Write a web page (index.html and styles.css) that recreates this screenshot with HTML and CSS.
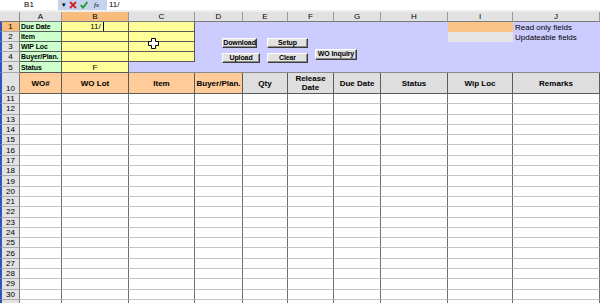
FILE: index.html
```html
<!DOCTYPE html>
<html>
<head>
<meta charset="utf-8">
<title>WO Sheet</title>
<link rel="stylesheet" href="styles.css">
</head>
<body>
<div class="app">
  <div class="fbar">
    <div class="namebox">B1</div>
    <div class="fbtns">
      <span class="dd">&#9662;</span>
      <svg class="ico" width="8" height="8" viewBox="0 0 8 8"><path d="M1 1L7 7M7 1L1 7" stroke="#d42020" stroke-width="1.8"/></svg>
      <svg class="ico" width="8" height="8" viewBox="0 0 8 8"><path d="M0.8 4.2L3 6.6L7.4 1" fill="none" stroke="#1f9a2e" stroke-width="1.8"/></svg>
      <span class="fx">fx</span>
    </div>
    <div class="formula">11/</div>
  </div>
  <div class="gap"></div>
  <div class="sheet">
    <div class="corner"></div>
    <div class="ch">A</div><div class="ch sel">B</div><div class="ch">C</div><div class="ch">D</div><div class="ch">E</div><div class="ch">F</div><div class="ch">G</div><div class="ch">H</div><div class="ch">I</div><div class="ch">J</div>

    <div class="rh sel">1</div>
    <div class="lbl">Due Date</div>
    <div class="inp edit"><span>11/</span><i class="caret"></i></div>
    <div class="inp"></div>
    <div class="panel">
      <div class="btn b-down">Download</div>
      <div class="btn b-setup">Setup</div>
      <div class="btn b-inq">WO Inquiry</div>
      <div class="btn b-up">Upload</div>
      <div class="btn b-clear">Clear</div>
    </div>
    <div class="sw ro"></div>
    <div class="legend">Read only fields</div>

    <div class="rh">2</div>
    <div class="lbl">Item</div>
    <div class="inp"></div>
    <div class="inp"></div>
    <div class="sw up"></div>
    <div class="legend">Updateable fields</div>

    <div class="rh">3</div>
    <div class="lbl">WIP Loc</div>
    <div class="inp"></div>
    <div class="inp"></div>
    <div class="side"></div>

    <div class="rh">4</div>
    <div class="lbl">Buyer/Plan.</div>
    <div class="inp"></div>
    <div class="inp"></div>

    <div class="rh">5</div>
    <div class="lbl last">Status</div>
    <div class="inp last ctr">F</div>
    <div class="lav"></div>

    <div class="rh r10">10</div>
    <div class="hd or">WO#</div><div class="hd or">WO Lot</div><div class="hd or">Item</div><div class="hd or">Buyer/Plan.</div>
    <div class="hd gr">Qty</div><div class="hd gr">Release<br>Date</div><div class="hd gr">Due Date</div><div class="hd gr">Status</div><div class="hd gr">Wip Loc</div><div class="hd gr">Remarks</div>

    <div class="rh">11</div><div class="d"></div><div class="d"></div><div class="d"></div><div class="d"></div><div class="d"></div><div class="d"></div><div class="d"></div><div class="d"></div><div class="d"></div><div class="d"></div>
    <div class="rh">12</div><div class="d"></div><div class="d"></div><div class="d"></div><div class="d"></div><div class="d"></div><div class="d"></div><div class="d"></div><div class="d"></div><div class="d"></div><div class="d"></div>
    <div class="rh">13</div><div class="d"></div><div class="d"></div><div class="d"></div><div class="d"></div><div class="d"></div><div class="d"></div><div class="d"></div><div class="d"></div><div class="d"></div><div class="d"></div>
    <div class="rh">14</div><div class="d"></div><div class="d"></div><div class="d"></div><div class="d"></div><div class="d"></div><div class="d"></div><div class="d"></div><div class="d"></div><div class="d"></div><div class="d"></div>
    <div class="rh">15</div><div class="d"></div><div class="d"></div><div class="d"></div><div class="d"></div><div class="d"></div><div class="d"></div><div class="d"></div><div class="d"></div><div class="d"></div><div class="d"></div>
    <div class="rh">16</div><div class="d"></div><div class="d"></div><div class="d"></div><div class="d"></div><div class="d"></div><div class="d"></div><div class="d"></div><div class="d"></div><div class="d"></div><div class="d"></div>
    <div class="rh">17</div><div class="d"></div><div class="d"></div><div class="d"></div><div class="d"></div><div class="d"></div><div class="d"></div><div class="d"></div><div class="d"></div><div class="d"></div><div class="d"></div>
    <div class="rh">18</div><div class="d"></div><div class="d"></div><div class="d"></div><div class="d"></div><div class="d"></div><div class="d"></div><div class="d"></div><div class="d"></div><div class="d"></div><div class="d"></div>
    <div class="rh">19</div><div class="d"></div><div class="d"></div><div class="d"></div><div class="d"></div><div class="d"></div><div class="d"></div><div class="d"></div><div class="d"></div><div class="d"></div><div class="d"></div>
    <div class="rh">20</div><div class="d"></div><div class="d"></div><div class="d"></div><div class="d"></div><div class="d"></div><div class="d"></div><div class="d"></div><div class="d"></div><div class="d"></div><div class="d"></div>
    <div class="rh">21</div><div class="d"></div><div class="d"></div><div class="d"></div><div class="d"></div><div class="d"></div><div class="d"></div><div class="d"></div><div class="d"></div><div class="d"></div><div class="d"></div>
    <div class="rh">22</div><div class="d"></div><div class="d"></div><div class="d"></div><div class="d"></div><div class="d"></div><div class="d"></div><div class="d"></div><div class="d"></div><div class="d"></div><div class="d"></div>
    <div class="rh">23</div><div class="d"></div><div class="d"></div><div class="d"></div><div class="d"></div><div class="d"></div><div class="d"></div><div class="d"></div><div class="d"></div><div class="d"></div><div class="d"></div>
    <div class="rh">24</div><div class="d"></div><div class="d"></div><div class="d"></div><div class="d"></div><div class="d"></div><div class="d"></div><div class="d"></div><div class="d"></div><div class="d"></div><div class="d"></div>
    <div class="rh">25</div><div class="d"></div><div class="d"></div><div class="d"></div><div class="d"></div><div class="d"></div><div class="d"></div><div class="d"></div><div class="d"></div><div class="d"></div><div class="d"></div>
    <div class="rh">26</div><div class="d"></div><div class="d"></div><div class="d"></div><div class="d"></div><div class="d"></div><div class="d"></div><div class="d"></div><div class="d"></div><div class="d"></div><div class="d"></div>
    <div class="rh">27</div><div class="d"></div><div class="d"></div><div class="d"></div><div class="d"></div><div class="d"></div><div class="d"></div><div class="d"></div><div class="d"></div><div class="d"></div><div class="d"></div>
    <div class="rh">28</div><div class="d"></div><div class="d"></div><div class="d"></div><div class="d"></div><div class="d"></div><div class="d"></div><div class="d"></div><div class="d"></div><div class="d"></div><div class="d"></div>
    <div class="rh">29</div><div class="d"></div><div class="d"></div><div class="d"></div><div class="d"></div><div class="d"></div><div class="d"></div><div class="d"></div><div class="d"></div><div class="d"></div><div class="d"></div>
    <div class="rh">30</div><div class="d"></div><div class="d"></div><div class="d"></div><div class="d"></div><div class="d"></div><div class="d"></div><div class="d"></div><div class="d"></div><div class="d"></div><div class="d"></div>
    <div class="rh"></div><div class="d"></div><div class="d"></div><div class="d"></div><div class="d"></div><div class="d"></div><div class="d"></div><div class="d"></div><div class="d"></div><div class="d"></div><div class="d"></div>
  </div>
  <svg class="cursor" width="11" height="11" viewBox="0 0 11 11"><path d="M3.5 0.5H7.5V3.5H10.5V7.5H7.5V10.5H3.5V7.5H0.5V3.5H3.5Z" fill="#fff" stroke="#000" stroke-width="1"/></svg>
</div>
</body>
</html>
```

FILE: styles.css
```css
* { box-sizing: border-box; margin: 0; padding: 0; }
html, body { width: 600px; height: 303px; overflow: hidden; background: #fff; }
body { font-family: "Liberation Sans", Arial, sans-serif; color: #000; }

.app { position: relative; display: flex; flex-direction: column; height: 303px; }

/* formula bar */
.fbar { display: flex; height: 10px; font-size: 8px; line-height: 10px; }
.namebox { width: 58px; text-align: center; background: #fff; }
.fbtns { width: 49px; background: #c4d4ef; display: flex; align-items: center; gap: 3px; padding-left: 4px; }
.dd { font-size: 7px; line-height: 10px; }
.ico { display: block; }
.fx { font-family: "Liberation Serif", serif; font-style: italic; font-size: 7px; margin-left: 3px; }
.formula { flex: 1; padding-left: 2px; background: #fff; }
.gap { height: 2px; background: #eeeeee; }

/* sheet grid */
.sheet {
  display: grid;
  grid-template-columns: 20px 42px 67px 66px 48px 45px 46px 47px 67px 65px 87px;
  grid-template-rows: 10px repeat(4, 10px) 11px 21px repeat(21, 10.3px);
  font-size: 8px;
  flex: 1;
  overflow: hidden;
}
.sheet > div { display: flex; align-items: center; min-width: 0; overflow: hidden; white-space: nowrap; }

.corner { background: #e2e2e2; border-right: 1px solid #8a8a8a; border-bottom: 1px solid #7a7a7a; }
.ch { background: #e2e2e2; border-right: 1px solid #9a9a9a; border-bottom: 1px solid #7a7a7a; justify-content: center; }
.ch.sel { background: #f8bd7c; }

.rh { background: #e2e2e2; border-left: 2px solid #3454bd; border-right: 1px solid #7a7a7a; border-bottom: 1px solid #a9a9a9; justify-content: center; }
.rh.sel { background: #f8bd7c; }
.rh.r10 { align-items: flex-end !important; }

.lbl { background: #ccffcc; border-right: 1px solid #5a5a5a; border-bottom: 1px solid #5a5a5a; font-weight: bold; font-size: 7px; letter-spacing: -0.1px; padding-left: 1px; }
.inp { background: #ffff99; border-right: 1px solid #5a5a5a; border-bottom: 1px solid #5a5a5a; }
.inp.ctr { justify-content: center; }
.inp.edit { justify-content: center; padding-left: 4px; }
.caret { display: block; width: 1px; height: 9px; background: #000; margin-left: 2px; }

.panel {
  grid-column: 5 / 10;
  grid-row: 2 / 7;
  background: #ccccff;
  border-bottom: 1px solid #8a8a8a;
  display: grid !important;
  grid-template-columns: 38px 41px 42px;
  grid-template-rows: 10px 11px;
  column-gap: 7px;
  row-gap: 4px;
  align-content: start;
  padding: 16px 0 0 27px;
}
.btn {
  background: #e2e2e2;
  border: 1px solid;
  border-color: #ffffff #3c3c3c #3c3c3c #ffffff;
  box-shadow: inset -1px -1px 0 #8c8c8c;
  font-weight: bold;
  font-size: 7px;
  line-height: 8px;
  text-align: center;
  white-space: nowrap;
  letter-spacing: -0.1px;
}
.b-down { grid-column: 1; grid-row: 1; width: 35px; }
.b-setup { grid-column: 2; grid-row: 1; }
.b-up { grid-column: 1; grid-row: 2; width: 38px; }
.b-clear { grid-column: 2; grid-row: 2; }
.b-inq { grid-column: 3; grid-row: 1 / 3; height: 11px; margin-top: 8px; }

.sw.ro { background: #fbc487; }
.sw.up { background: #e5e5e5; }
.legend { background: #ccccff; padding-left: 2px; }
.side { grid-column: 10 / 12; grid-row: 4 / 7; background: #ccccff; border-bottom: 1px solid #8a8a8a; }
.lav { background: #ccccff; border-bottom: 1px solid #8a8a8a; }

.hd { justify-content: center; text-align: center; font-weight: bold; font-size: 8px; line-height: 9px; border-right: 1px solid #5a5a5a; border-bottom: 1px solid #5a5a5a; white-space: normal !important; }
.hd.or { background: #ffcc99; }
.hd.gr { background: #dedede; }

.d { background: #fff; border-right: 1px solid #6f6f6f; border-bottom: 1px solid #c4c4c4; }

.cursor { position: absolute; left: 148px; top: 38px; }
```
